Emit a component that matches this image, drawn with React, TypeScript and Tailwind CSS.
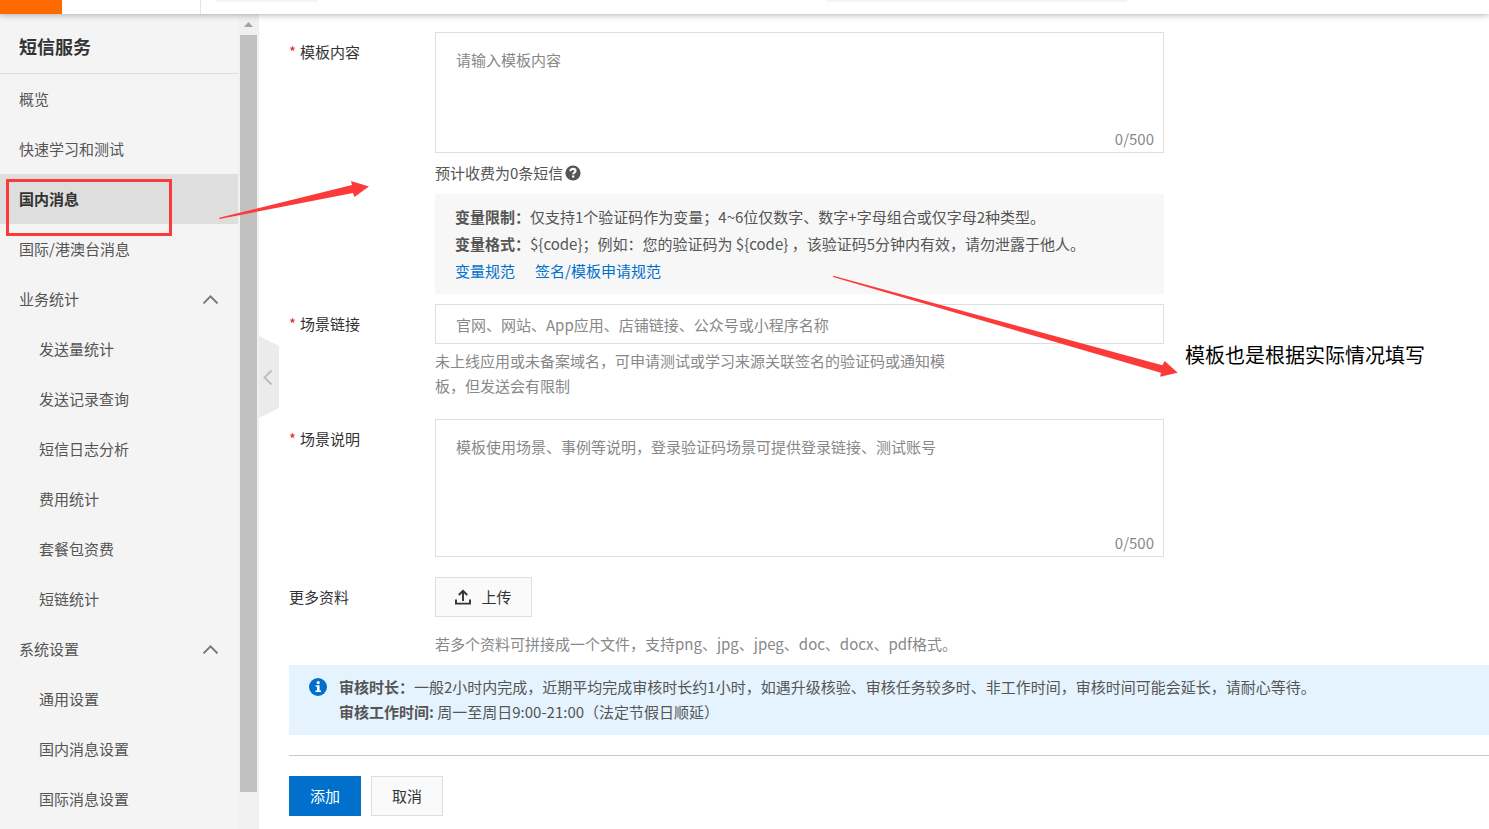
import { useState } from "react";
import type { ReactNode } from "react";

type NavItem = { label: string; active?: boolean };
type NavGroup = { label: string; children: string[] };

const topItems: NavItem[] = [
  { label: "概览" },
  { label: "快速学习和测试" },
  { label: "国内消息", active: true },
  { label: "国际/港澳台消息" },
];

const groups: NavGroup[] = [
  {
    label: "业务统计",
    children: ["发送量统计", "发送记录查询", "短信日志分析", "费用统计", "套餐包资费", "短链统计"],
  },
  {
    label: "系统设置",
    children: ["通用设置", "国内消息设置", "国际消息设置"],
  },
];

function ChevronUp() {
  return (
    <svg width="16" height="10" viewBox="0 0 16 10" fill="none" stroke="#777" strokeWidth="1.9">
      <path d="M1.5 9.4 8.5 2.4l7 7" />
    </svg>
  );
}

function QuestionIcon() {
  return (
    <svg width="16" height="16" viewBox="0 0 16 16" fill="none">
      <circle cx="8" cy="8" r="7.6" fill="#555" />
      <path d="M5.4 6.3c0-1.5 1-2.4 2.6-2.4s2.5.9 2.5 2.1c0 1.7-2.3 1.7-2.3 3.3" stroke="#fff" strokeWidth="2.1" />
      <rect x="7.1" y="10.4" width="2.2" height="2.2" fill="#fff" />
    </svg>
  );
}

function InfoIcon() {
  return (
    <svg width="18" height="18" viewBox="0 0 18 18">
      <circle cx="9" cy="9" r="9" fill="#0070cc" />
      <circle cx="9.2" cy="4.6" r="1.6" fill="#fff" />
      <path d="M6.6 7.2h4v5.2h1.4v1.5H6.5v-1.5H8V8.7H6.6z" fill="#fff" />
    </svg>
  );
}

function UploadIcon() {
  return (
    <svg width="16" height="16" viewBox="0 0 16 16" fill="none" stroke="#333" strokeWidth="1.9">
      <path d="M1 10.5v4.1h14v-4.1" />
      <path d="M8 12V2M3.8 6 8 1.8 12.2 6" />
    </svg>
  );
}

function Sidebar() {
  return (
    <aside className="flex w-[259px] shrink-0 bg-[#f4f4f4]">
      <nav className="flex-1 overflow-hidden">
        <h1 className="flex h-[60px] items-center border-b border-[#dedede] pt-1.5 pl-[19px] text-[18px] font-bold text-[#333]">
          短信服务
        </h1>
        {topItems.map((item) => (
          <a
            key={item.label}
            href="#"
            className={
              item.active
                ? "flex h-[50px] items-center bg-[#dedede] pl-[19px] font-bold text-[#333]"
                : "flex h-[50px] items-center pl-[19px]"
            }
          >
            {item.label}
          </a>
        ))}
        {groups.map((group) => (
          <div key={group.label}>
            <button className="flex h-[50px] w-full items-center justify-between pr-5 pl-[19px]">
              {group.label}
              <ChevronUp />
            </button>
            {group.children.map((child) => (
              <a key={child} href="#" className="flex h-[50px] items-center pl-[39px]">
                {child}
              </a>
            ))}
          </div>
        ))}
      </nav>
      {/* scrollbar */}
      <div className="flex w-[21px] flex-col items-center bg-[#f0f0f0] pb-[37px]">
        <svg className="my-2 shrink-0" width="9" height="5" viewBox="0 0 9 5">
          <path d="M4.5 0 9 5H0z" fill="#a3a3a3" />
        </svg>
        <div className="w-[17px] flex-1 bg-[#c1c1c1]" />
      </div>
    </aside>
  );
}

function FormRow({ label, htmlFor, required, children }: { label: string; htmlFor: string; required?: boolean; children: ReactNode }) {
  return (
    <div className="flex">
      <label htmlFor={htmlFor} className="w-[146px] shrink-0 leading-10 text-[#333]">
        {required && <span className="mr-1 text-[#d93026]">*</span>}
        {label}
      </label>
      <div className="w-full max-w-[729px]">{children}</div>
    </div>
  );
}

function CountedTextarea({ id, placeholder, className }: { id: string; placeholder: string; className: string }) {
  const [value, setValue] = useState("");

  return (
    <div className="relative">
      <textarea
        id={id}
        value={value}
        maxLength={500}
        onChange={(e) => setValue(e.target.value)}
        placeholder={placeholder}
        className={`block w-full resize-none border border-[#dedede] px-5 pt-[15px] leading-6 outline-none placeholder:text-[#888] ${className}`}
      />
      <span className="absolute right-2.5 bottom-0 leading-7 text-[#888]">{value.length}/500</span>
    </div>
  );
}

function Annotations() {
  return (
    <div className="pointer-events-none absolute inset-0 overflow-hidden">
      <div className="absolute top-[179px] left-1.5 h-[57px] w-[166px] border-3 border-[#fc3a3a]" />
      <svg className="absolute top-0 left-0" width="1200" height="400" viewBox="0 0 1200 400" fill="#fc3a3a">
        <path d="M219.2 217.8 352 185l-1-4 17.9 5.4L354.5 197l-1.5-4L219.6 219z" />
        <path d="M833.2 275.8 1162.4 365.3l2.3-4.3 13 11.8-17.5 4 .6-4.1L833 276.9z" />
      </svg>
      <p className="absolute top-[340px] left-[1185px] text-[20px] leading-[30px] whitespace-nowrap text-black">
        模板也是根据实际情况填写
      </p>
    </div>
  );
}

export default function App() {
  return (
    <div className="relative flex h-screen flex-col overflow-hidden bg-white font-['Noto_Sans_CJK_SC',sans-serif] text-[15px] text-[#555]">
      <header className="z-10 flex h-3.5 shrink-0 items-start bg-white shadow-[0_1px_6px_rgba(0,0,0,0.3)]">
        <div className="h-full w-[62px] bg-[#ff6a00]" />
        <div className="h-full w-[139px] border-r border-[#e5e5e5]" />
        <div className="ml-[15px] h-0.5 w-[102px] rounded-b-sm bg-[#f4f4f4]" />
        <div className="mr-[362px] ml-auto h-0.5 w-[300px] bg-[#f4f4f4]" />
      </header>

      <div className="flex min-h-0 flex-1">
        <Sidebar />

        <button aria-label="收起" className="-mr-5 h-[82px] w-5 shrink-0 self-center -translate-y-[45px]">
          <svg width="20" height="82" viewBox="0 0 20 82" fill="none">
            <path d="M0 0 20 10v62L0 82z" fill="#ebebeb" />
            <path d="M12.5 34.5 5.5 41.5l7 7" stroke="#bbb" strokeWidth="1.8" />
          </svg>
        </button>

        <main className="min-w-0 flex-1 pt-[18px] pl-[30px]">
          <form className="flex flex-col" onSubmit={(e) => e.preventDefault()}>
            <FormRow label="模板内容" htmlFor="content" required>
              <CountedTextarea id="content" placeholder="请输入模板内容" className="h-[121px]" />
              <div className="flex h-10 items-center gap-0.5">
                预计收费为0条短信
                <QuestionIcon />
              </div>
              <div className="mt-px mb-2.5 bg-[#f7f7f7] px-5 pt-[9px] pb-2.5 leading-[27px]">
                <p>
                  <b>变量限制：</b>仅支持1个验证码作为变量；4~6位仅数字、数字+字母组合或仅字母2种类型。
                </p>
                <p>
                  <b>变量格式：</b>
                  {"${code}；例如：您的验证码为 ${code} ，该验证码5分钟内有效，请勿泄露于他人。"}
                </p>
                <p className="flex gap-5 text-[#0070cc]">
                  <a href="#">变量规范</a>
                  <a href="#">签名/模板申请规范</a>
                </p>
              </div>
            </FormRow>

            <FormRow label="场景链接" htmlFor="link" required>
              <input
                id="link"
                type="text"
                placeholder="官网、网站、App应用、店铺链接、公众号或小程序名称"
                className="block h-10 w-full border border-[#dedede] px-5 outline-none placeholder:text-[#888]"
              />
              <p className="mt-1 mb-[21px] max-w-[520px] leading-[25px] text-[#888]">
                未上线应用或未备案域名，可申请测试或学习来源关联签名的验证码或通知模板，但发送会有限制
              </p>
            </FormRow>

            <FormRow label="场景说明" htmlFor="scene" required>
              <CountedTextarea
                id="scene"
                placeholder="模板使用场景、事例等说明，登录验证码场景可提供登录链接、测试账号"
                className="mb-5 h-[138px]"
              />
            </FormRow>

            <FormRow label="更多资料" htmlFor="upload">
              <button
                id="upload"
                type="button"
                className="flex h-10 w-[97px] items-center justify-center gap-2.5 border border-[#dedede] bg-[#fafafa] text-[#333]"
              >
                <UploadIcon />
                上传
              </button>
              <p className="mt-3.5 mb-[9px] leading-[25px] text-[#888]">
                若多个资料可拼接成一个文件，支持png、jpg、jpeg、doc、docx、pdf格式。
              </p>
            </FormRow>

            <div className="flex gap-3 bg-[#e4f3fe] px-5 pt-[9px] pb-[11px] leading-[25px]">
              <div className="shrink-0 pt-1">
                <InfoIcon />
              </div>
              <div>
                <p>
                  <b>审核时长：</b>一般2小时内完成，近期平均完成审核时长约1小时，如遇升级核验、审核任务较多时、非工作时间，审核时间可能会延长，请耐心等待。
                </p>
                <p>
                  <b>审核工作时间:</b> 周一至周日9:00-21:00（法定节假日顺延）
                </p>
              </div>
            </div>

            <hr className="my-5 border-[#c8c8c8]" />

            <div className="flex gap-2.5">
              <button type="submit" className="h-10 w-[72px] bg-[#0070cc] text-white">
                添加
              </button>
              <button type="button" className="h-10 w-[72px] border border-[#dedede] bg-[#fafafa] text-[#333]">
                取消
              </button>
            </div>
          </form>
        </main>
      </div>

      <Annotations />
    </div>
  );
}
